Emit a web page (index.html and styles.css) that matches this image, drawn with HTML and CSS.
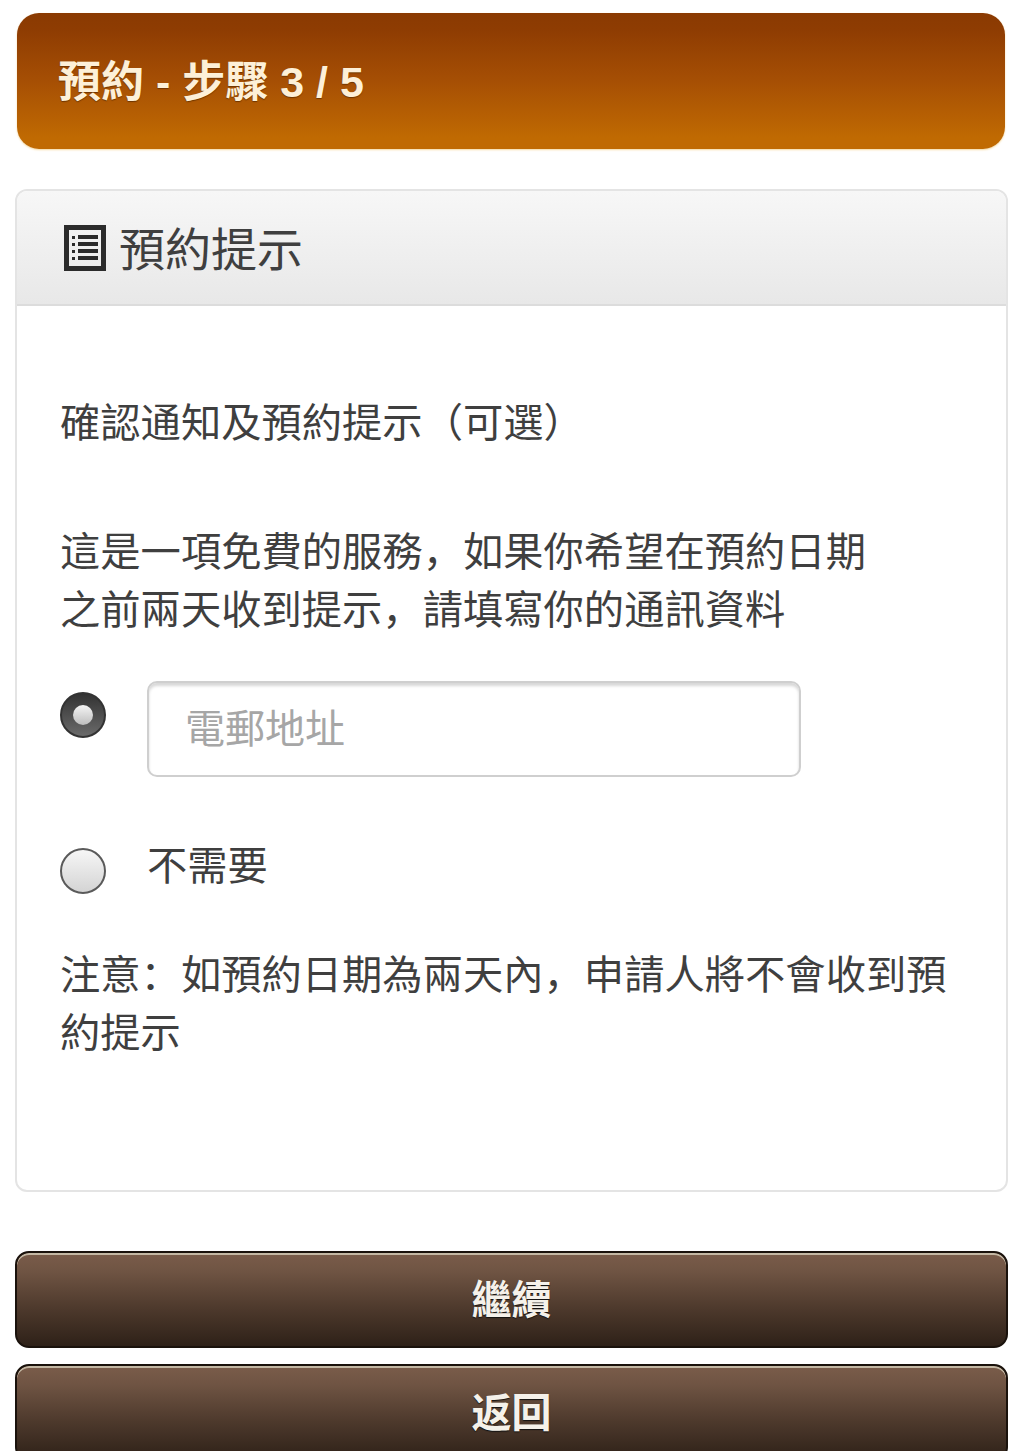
FILE: index.html
```html
<!DOCTYPE html>
<html lang="zh">
<head>
  <meta charset="UTF-8">
  <meta name="viewport" content="width=device-width, initial-scale=1.0">
  <title>預約 - 步驟 3 / 5</title>
  <link rel="stylesheet" href="styles.css">
</head>
<body>
  <h1 class="page-title">預約 - 步驟 3 / 5</h1>

  <div class="card">
    <div class="card-head">
      <svg class="list-icon" viewBox="0 0 42 46" aria-hidden="true">
        <path fill="#2b2b2b" fill-rule="evenodd" d="M0 0H42V46H0ZM5 5V41H37V5Z"/>
        <path fill="#2b2b2b" d="M8 11H11V14H8ZM14 10H34V14H14ZM8 18H11V21H8ZM14 17H34V21H14ZM8 25H11V28H8ZM14 24H34V28H14ZM8 32H11V35H8ZM14 31H34V35H14Z"/>
      </svg>
      <span class="card-title">預約提示</span>
    </div>
    <div class="card-body">
      <p class="intro">確認通知及預約提示&#xFF08;可選&#xFF09;</p>
      <p class="desc">這是一項免費的服務&#xFF0C;如果你希望在預約日期<br>之前兩天收到提示&#xFF0C;請填寫你的通訊資料</p>
      <div class="option option-email">
        <span class="radio radio-on"></span>
        <input class="text-input" type="text" placeholder="電郵地址">
      </div>
      <div class="option option-none">
        <span class="radio"></span>
        <span class="option-label">不需要</span>
      </div>
      <p class="note">注意&#xFF1A;如預約日期為兩天內&#xFF0C;申請人將不會收到預約提示</p>
    </div>
  </div>

  <button class="brown-btn btn-next">繼續</button>
  <button class="brown-btn">返回</button>
</body>
</html>
```

FILE: styles.css
```css
html, body {
  height: 1451px;
  overflow: hidden;
}
body {
  margin: 0;
  padding: 13px 11px 0 15px;
  box-sizing: border-box;
  background-color: #fff;
  color: #3f3f3f;
  font-family: "Liberation Sans", "Noto Sans CJK SC", sans-serif;
}
p {
  margin: 0;
}
.page-title {
  margin: 0 3px 40px 2px;
  height: 136px;
  box-sizing: border-box;
  padding-left: 41px;
  line-height: 138px;
  font-size: 43px;
  font-weight: bold;
  color: #fdf0d8;
  background: linear-gradient(#8a3a02, #8e3c02 12%, #a64f04 50%, #c06a02 92%);
  border-radius: 22px;
  box-shadow: 0 1px 2px #f5d9a0;
  text-shadow: 0 1px 1px #6e3500;
}
.card {
  height: 1003px;
  box-sizing: border-box;
  border: 2px solid #e4e4e4;
  border-radius: 12px;
  background-color: #fff;
}
.card-head {
  height: 115px;
  box-sizing: border-box;
  display: flex;
  align-items: center;
  gap: 13px;
  padding-left: 47px;
  font-size: 46px;
  background: linear-gradient(#f7f7f7, #e8e8e8);
  border-bottom: 2px solid #dcdcdc;
  border-radius: 10px 10px 0 0;
}
.card-title {
  padding-bottom: 3px;
}
.list-icon {
  width: 42px;
  height: 46px;
}
.card-body {
  padding: 89px 40px 0 43px;
  font-size: 40.3px;
  line-height: 58px;
}
.desc {
  margin-top: 71px;
}
.option {
  display: flex;
  align-items: flex-start;
  gap: 41px;
}
.option-email {
  margin-top: 41px;
}
.option-none {
  margin-top: 60px;
}
.option-label {
  margin-top: 1px;
}
.radio {
  flex: none;
  width: 46px;
  height: 46px;
  box-sizing: border-box;
  border: 2px solid #5a5a5a;
  border-radius: 50%;
  background: linear-gradient(#f6f6f6, #d4d4d4);
}
.radio-on {
  margin-top: 11px;
  display: flex;
  align-items: center;
  justify-content: center;
  border-color: #333;
  background: linear-gradient(#333, #6a6a6a);
}
.radio-on::after {
  content: "";
  width: 20px;
  height: 20px;
  border-radius: 50%;
  background: linear-gradient(#f5f5f5, #bdbdbd);
}
.option-none .radio {
  margin-top: 11px;
}
.text-input {
  width: 654px;
  height: 96px;
  box-sizing: border-box;
  padding: 0 36px;
  border: 2px solid #cfcfcf;
  border-radius: 10px;
  box-shadow: inset 0 3px 3px #d8d8d8;
  font: 40px "Liberation Sans", "Noto Sans CJK SC", sans-serif;
  outline: none;
}
.text-input::placeholder {
  color: #a6a6a6;
  opacity: 1;
}
.note {
  margin-top: 51px;
}
.brown-btn {
  display: block;
  width: 993px;
  height: 97px;
  padding: 0 0 5px;
  border: 2px solid #1a120c;
  border-radius: 14px;
  background: linear-gradient(#7a5c4a, #6f5443 20%, #4d392c 60%, #2e2118);
  box-shadow: inset 0 2px 0 #c4b8a4;
  color: #f5f1ea;
  font: bold 40px "Liberation Sans", "Noto Sans CJK SC", sans-serif;
  text-shadow: 0 1px 1px #111;
  cursor: pointer;
}
.btn-next {
  margin: 59px 0 16px;
}
```
